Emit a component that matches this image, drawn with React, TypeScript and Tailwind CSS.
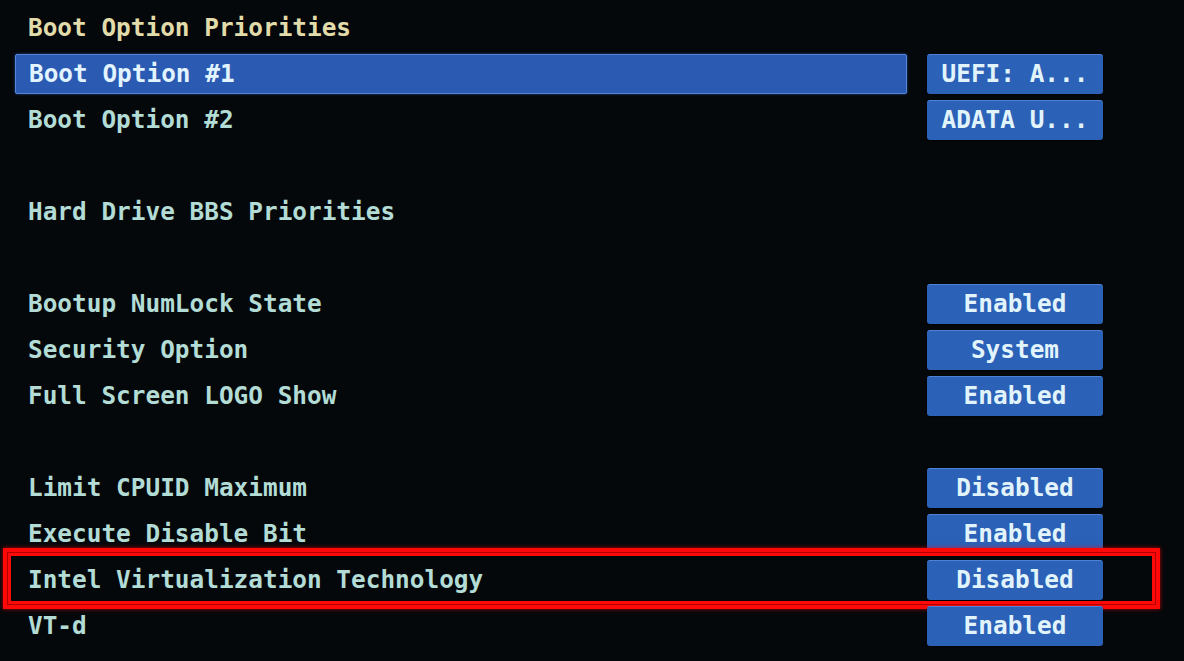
import React from "react";

type Row = {
  label?: string;
  value?: string;
  kind?: "title" | "selected" | "normal" | "empty";
  boxed?: boolean;
};

const rows: Row[] = [
  { label: "Boot Option Priorities", kind: "title" },
  { label: "Boot Option #1", value: "UEFI: A...", kind: "selected" },
  { label: "Boot Option #2", value: "ADATA U...", kind: "normal" },
  { kind: "empty" },
  { label: "Hard Drive BBS Priorities", kind: "normal" },
  { kind: "empty" },
  { label: "Bootup NumLock State", value: "Enabled", kind: "normal" },
  { label: "Security Option", value: "System", kind: "normal" },
  { label: "Full Screen LOGO Show", value: "Enabled", kind: "normal" },
  { kind: "empty" },
  { label: "Limit CPUID Maximum", value: "Disabled", kind: "normal" },
  { label: "Execute Disable Bit", value: "Enabled", kind: "normal" },
  { label: "Intel Virtualization Technology", value: "Disabled", kind: "normal", boxed: true },
  { label: "VT-d", value: "Enabled", kind: "normal" },
];

function BiosRow({ row }: { row: Row }) {
  const labelColor =
    row.kind === "title"
      ? "text-[#e2dcaa]"
      : row.kind === "selected"
      ? "text-[#e2f4ff]"
      : "text-[#b2dcd5]";
  return (
    <div className="relative flex h-[46px] items-center pl-[15px]">
      <div
        className={
          "flex h-[40px] w-[892px] items-center pl-[13px] " +
          (row.kind === "selected"
            ? "rounded-[2px] border border-[#5585d8] bg-[#2a5ab2] shadow-[0_0_3px_rgba(60,110,210,0.6)]"
            : "")
        }
      >
        {row.label && (
          <span className={"whitespace-pre leading-none " + labelColor}>{row.label}</span>
        )}
      </div>
      {row.value && (
        <div className="ml-[20px] flex h-[40px] w-[176px] items-center justify-center rounded-[3px] border-t border-[#4f82d6] bg-[#2b61b7] shadow-[0_1px_2px_rgba(0,0,0,0.6)]">
          <span className="whitespace-pre leading-none text-[#e2f4fb]">{row.value}</span>
        </div>
      )}
      {row.boxed && (
        <div className="absolute left-[3px] top-[-9px] h-[61px] w-[1157px] border-[4px] border-[#ff0808] shadow-[0_0_4px_rgba(255,0,0,0.7)]">
          <div className="h-full w-full border border-[#b00000]">
            <div className="h-full w-full border-[3px] border-[#ff0808]" />
          </div>
        </div>
      )}
    </div>
  );
}

export default function App() {
  return (
    <div
      className="h-[661px] w-[1184px] overflow-hidden bg-[#05080b] pt-[5px] text-[24.4px] font-bold"
      style={{ fontFamily: '"DejaVu Sans Mono", "Liberation Mono", monospace' }}
    >
      {rows.map((r, i) => (
        <BiosRow key={i} row={r} />
      ))}
    </div>
  );
}
